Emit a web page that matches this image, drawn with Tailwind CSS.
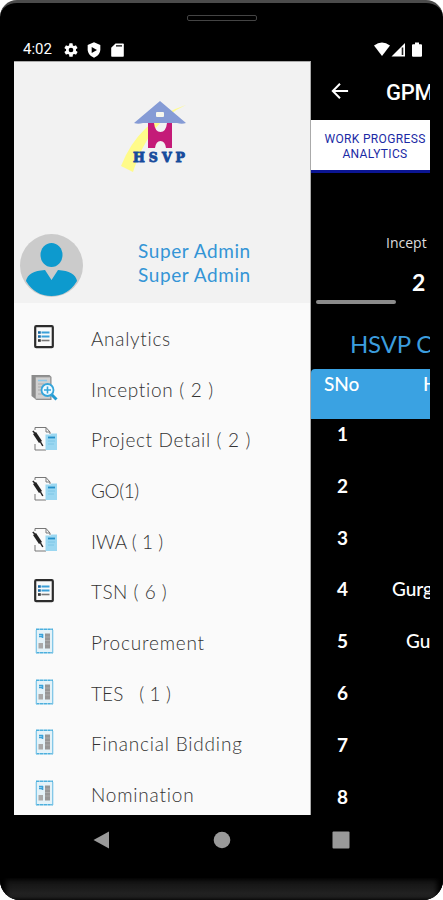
<!DOCTYPE html>
<html lang="en">
<head>
  <meta charset="UTF-8" />
  <meta name="viewport" content="width=device-width, initial-scale=1" />
  <title>HSVP - Menu</title>
  <script src="https://cdn.jsdelivr.net/npm/@tailwindcss/browser@4"></script>
</head>
<body class="bg-white overflow-hidden">

  <!-- icons shared by the menu rows -->
  <svg class="hidden">
    <symbol id="ic-list" viewBox="0 0 28 28">
      <rect x="5.2" y="3.2" width="17.6" height="21" rx="1" fill="#fafafa" stroke="#2c2c2c" stroke-width="2.2" />
      <path d="M11.500 9.500h8M11.500 13.500h8" stroke="#3b9fd8" stroke-width="1.800" />
      <path d="M11.500 17.500h8" stroke="#777" stroke-width="1.600" />
      <path d="M8 9.500h2.800M8 13.500h2.800" stroke="#1769a5" stroke-width="2.600" />
      <path d="M8 17.500h2.800" stroke="#333" stroke-width="2.600" />
    </symbol>
    <symbol id="ic-search" viewBox="0 0 28 28">
      <path d="M1.500 1h18l2 2v23h-15l-5-4z" fill="#8b8b8b" />
      <path d="M5.500 3h15v22h-15z" fill="#d0d0d0" stroke="#999" stroke-width=".8" />
      <path d="M8 6.500h9" stroke="#8cc8e8" stroke-width="1.500" />
      <path d="M8 10h6M8 13h4M8 16h4M8 20h7" stroke="#aaa" />
      <path d="M21 20l5.500 5.500" stroke="#239bd2" stroke-width="3" />
      <circle cx="17.500" cy="16" r="6" fill="#effaff" stroke="#35a5da" stroke-width="1.800" />
      <path d="M14 16h7M17.500 12.500v7" stroke="#35a5da" stroke-width="1.600" />
    </symbol>
    <symbol id="ic-edit" viewBox="0 0 28 28">
      <path d="M5 2.500h11l4 4V25H5z" fill="#fafafa" />
      <path d="M5 5v-2.500h11l4 4.500v2M5 19v6h11M16 2.500v4.500h4" fill="none" stroke="#777" />
      <path d="M15.500 9.500h5l1-1h5.500v16.500H15.500z" fill="#9bd7f1" />
      <path d="M18 12.500h7" stroke="#238fc8" stroke-width="1.800" />
      <path d="M18 16h7M18 19h6" stroke="#7dc6e6" />
      <path d="M4.500 8l6 9" stroke="#222" stroke-width="3.600" />
      <path d="M2.800 6l2 2M10.500 17l2.300 4" stroke="#222" stroke-width="1.500" />
    </symbol>
    <symbol id="ic-paper" viewBox="0 0 28 28">
      <path d="M6 2.500h17v23H6z" fill="#e4f2f8" />
      <path d="M6 2.200h17M6 25.800h17" stroke="#4bafdd" stroke-width="1.500" stroke-dasharray="3.400 .4" />
      <path d="M6.300 3v23M22.700 3v23" stroke="#79c4e6" stroke-width="1.200" />
      <path d="M15 6.500h5v15h-5z" fill="#969696" />
      <path d="M15 10h5M15 13.500h5M15 17h5" stroke="#b5b5b5" stroke-width=".7" />
      <path d="M8.500 16h4.500v5.500H8.500z" fill="#aaa" />
      <path d="M9 7.500h4M12.500 7v4M9 9.500h3" stroke="#3aa2da" stroke-width="1.600" />
    </symbol>
  </svg>

  <div class="relative w-[443px] h-[900px] rounded-t-[17px] rounded-b-[20px] bg-black border-t-[3px] border-[#4b4b4b] overflow-hidden flex flex-col">

    <div class="h-[35px] shrink-0 flex justify-center pt-[12px]">
      <div class="w-[70px] h-[6px] border border-[#444] rounded-[2px]"></div>
    </div>

    <!-- status bar -->
    <div class="h-[23px] shrink-0 flex items-center justify-between pl-[23px] pr-[20px]">
      <div class="flex items-center text-white">
        <span class="w-[40px] font-['Roboto'] text-[15px] leading-none whitespace-nowrap">4:02</span>
        <svg class="w-[16px] h-[16px]" viewBox="0 0 24 24" fill="#fff"><path d="M19.400 13c.1-.7.1-1.300 0-2l2.100-1.600c.2-.2.3-.4.100-.7l-2-3.400c-.1-.2-.4-.3-.6-.2l-2.500 1a7 7 0 0 0-1.700-1l-.4-2.600A.5.500 0 0 0 14 2h-4a.5.500 0 0 0-.5.400l-.4 2.700a7 7 0 0 0-1.700 1l-2.500-1c-.2-.1-.5 0-.6.200l-2 3.400c-.1.300-.1.500.1.700L4.600 11v2l-2.200 1.600c-.2.200-.2.400-.1.700l2 3.400c.1.200.4.300.6.200l2.500-1q.8.600 1.700 1l.4 2.700c0 .2.200.4.500.4h4c.2 0 .5-.2.500-.4l.4-2.700q.9-.4 1.700-1l2.500 1c.2.100.5 0 .6-.2l2-3.400c.1-.3.1-.5-.1-.7zM12 15.500a3.500 3.500 0 1 1 0-7 3.500 3.500 0 0 1 0 7z" /></svg>
        <svg class="w-[16px] h-[16px] ml-[7px]" viewBox="0 0 24 24"><path d="M12 .500L21.500 4.500v6.500c0 6-4 10.500-9.500 12.500C6.500 21.500 2.500 17 2.500 11V4.500z" fill="#fff" /><path d="M8.500 7.500v9l8-4.500z" fill="#000" /></svg>
        <svg class="w-[13px] h-[14px] ml-[9px]" viewBox="0 0 13 14"><path d="M4.500.500H12q.8 0 .8.800V13q0 .8-.8.800H1q-.8 0-.8-.8V4.800z" fill="#fff" /><path d="M5 2.800h6" stroke="#000" stroke-width="1.200" /></svg>
      </div>
      <svg class="w-[48px] h-[15px] mr-px" viewBox="0 0 48 15" fill="#fff">
        <path d="M0 3.500q8-6 16 0l-8 10.500z" />
        <path d="M31 1v13.500H17.500z" /><path d="M28.500 5.500v7.500" stroke="#222" stroke-width="1.600" />
        <path d="M41 .500h4v1.700h2q1 0 1 1v10.500q0 1-1 1h-8q-1 0-1-1V3.200q0-1 1-1h2z" />
      </svg>
    </div>

    <div class="h-[754px] shrink-0 flex ml-[14px] mr-[13px]">

      <!-- drawer -->
      <aside class="w-[297px] shrink-0 bg-[#fafafa] overflow-hidden border-r border-t border-[#aaa] font-['Lato'] font-light">
        <div class="h-[241px] bg-[#f2f2f2] flex flex-col">
          <div class="h-[172px] flex justify-center pt-[39px] pr-[16px]">
            <svg class="w-[66px] h-[71px]" viewBox="0 0 66 71">
              <path d="M65 4Q28 20 12 71L0 65Q18 19 65 4z" fill="#fffb8a" />
              <path d="M39 0L65 22q-4 1.500-9 0H22q-5 1.500-9 0z" fill="#859bd5" />
              <rect x="35" y="11" width="8" height="5" rx="1" fill="#f6f6ed" />
              <path d="M27 22h6q1 9 6.500 9t6.500-9h5v25h-6q-1-7-5.500-7t-5.500 7h-7z" fill="#c41b78" />
              <text x="12" y="61" textLength="52" lengthAdjust="spacing" font-family="DejaVu Serif" font-weight="bold" font-size="12.500" fill="#174b9c" stroke="#174b9c" stroke-width=".9">HSVP</text>
            </svg>
          </div>
          <div class="flex items-center pl-[6px]">
            <svg class="w-[63px] h-[63px] shrink-0" viewBox="0 0 63 63">
              <circle cx="31.500" cy="31.500" r="31.500" fill="#cbcbcb" />
              <ellipse cx="31.500" cy="21" rx="11" ry="12" fill="#0d9ace" />
              <path d="M6 47Q8 37 25 36l6.500 10L38 36Q55 37 57 47Q48 62 31.500 62T6 47z" fill="#0d9ace" />
            </svg>
            <div class="ml-[55px] -mt-[5px] text-[#3495d6] text-[19px] leading-6 font-normal tracking-[0.600px] whitespace-nowrap">
              <p>Super Admin</p>
              <p>Super Admin</p>
            </div>
          </div>
        </div>

        <ul class="pt-[11px] text-[19px] text-[#333]">
          <li class="h-[50.650px] flex items-center pl-4"><svg class="w-7 h-7 -mt-1 mr-[33px]"><use href="#ic-list" /></svg><span class="tracking-[0.7px] whitespace-pre">Analytics</span></li>
          <li class="h-[50.650px] flex items-center pl-4"><svg class="w-7 h-7 -mt-1 mr-[33px]"><use href="#ic-search" /></svg><span class="tracking-[0.7px] whitespace-pre">Inception ( 2 )</span></li>
          <li class="h-[50.650px] flex items-center pl-4"><svg class="w-7 h-7 -mt-1 mr-[33px]"><use href="#ic-edit" /></svg><span class="tracking-[0.65px] whitespace-pre">Project Detail ( 2 )</span></li>
          <li class="h-[50.650px] flex items-center pl-4"><svg class="w-7 h-7 -mt-1 mr-[33px]"><use href="#ic-edit" /></svg><span class="tracking-[-0.4px] whitespace-pre">GO(1)</span></li>
          <li class="h-[50.650px] flex items-center pl-4"><svg class="w-7 h-7 -mt-1 mr-[33px]"><use href="#ic-edit" /></svg><span class="tracking-[0.05px] whitespace-pre">IWA ( 1 )</span></li>
          <li class="h-[50.650px] flex items-center pl-4"><svg class="w-7 h-7 -mt-1 mr-[33px]"><use href="#ic-list" /></svg><span class="tracking-[0.5px] whitespace-pre">TSN ( 6 )</span></li>
          <li class="h-[50.650px] flex items-center pl-4"><svg class="w-7 h-7 -mt-1 mr-[33px]"><use href="#ic-paper" /></svg><span class="tracking-[0.8px] whitespace-pre">Procurement</span></li>
          <li class="h-[50.650px] flex items-center pl-4"><svg class="w-7 h-7 -mt-1 mr-[33px]"><use href="#ic-paper" /></svg><span class="tracking-[0.1px] whitespace-pre">TES   ( 1 )</span></li>
          <li class="h-[50.650px] flex items-center pl-4"><svg class="w-7 h-7 -mt-1 mr-[33px]"><use href="#ic-paper" /></svg><span class="tracking-[0.8px] whitespace-pre">Financial Bidding</span></li>
          <li class="h-[50.650px] flex items-center pl-4"><svg class="w-7 h-7 -mt-1 mr-[33px]"><use href="#ic-paper" /></svg><span class="tracking-[0.8px] whitespace-pre">Nomination</span></li>
        </ul>
      </aside>

      <!-- page behind the drawer -->
      <main class="w-[119px] overflow-hidden text-white font-['Lato'] whitespace-nowrap">
        <div class="h-[59px] flex items-center pl-[20px]">
          <svg class="w-[18px] h-[18px] shrink-0" viewBox="0 0 20 20" fill="none" stroke="#fff" stroke-width="2.200"><path d="M19 10H2M10 2L2 10l8 8" /></svg>
          <h1 class="ml-[37px] mt-[3px] font-['Roboto'] font-medium text-[22px] tracking-[-0.3px]">GPM</h1>
        </div>
        <div class="h-[53px] bg-white border-b-[3px] border-[#0b1592] flex items-center justify-center pl-[9px] pt-[3px] font-['Roboto'] text-[12px] leading-[15px] tracking-[0.35px] text-[#1b2aa5] text-center">
          <p>WORK PROGRESS<br>ANALYTICS</p>
        </div>
        <div class="pt-[60px] pl-[75px] font-['Open_Sans'] text-[14px] leading-5 text-[#ddd]">Incept</div>
        <div class="pl-[101px] pt-[14px] text-[23px] leading-[30px] font-bold -mb-[9px]">2</div>
        <div class="mt-[12px] ml-[5px] w-[80px] h-[4px] rounded-full bg-[#8b8b8b]"></div>
        <div class="h-[65px] pt-[25px] pl-[39px] text-[24px] leading-[30px] tracking-[-0.2px] text-[#3c9dde]">HSVP C</div>
        <div class="h-[50px] bg-[#3aa2e2] rounded-tl-[4px] flex pl-[13px] pt-[3px] text-[19px] leading-6 font-medium">
          <span class="w-[99px] shrink-0">SNo</span><span>H</span>
        </div>
        <div class="text-[19px] leading-[30px] font-bold">
          <div class="h-[51.800px] flex pl-[26px]"><span>1</span></div>
          <div class="h-[51.800px] flex pl-[26px]"><span>2</span></div>
          <div class="h-[51.800px] flex pl-[26px]"><span>3</span></div>
          <div class="h-[51.800px] flex pl-[26px]"><span class="w-[55px] shrink-0">4</span><span class="font-medium">Gurg</span></div>
          <div class="h-[51.800px] flex pl-[26px]"><span class="w-[69px] shrink-0">5</span><span class="font-medium">Gu</span></div>
          <div class="h-[51.800px] flex pl-[26px]"><span>6</span></div>
          <div class="h-[51.800px] flex pl-[26px]"><span>7</span></div>
          <div class="h-[51.800px] flex pl-[26px]"><span>8</span></div>
        </div>
      </main>
    </div>

    <!-- navigation buttons -->
    <div class="h-[50px] shrink-0 flex items-center pl-[93px] fill-[#999]">
      <svg class="w-[17px] h-[18px]" viewBox="0 0 17 18"><path d="M16 .500v17L.500 9z" /></svg>
      <svg class="w-[18px] h-[18px] ml-[103px]" viewBox="0 0 18 18"><circle cx="9" cy="9" r="8.300" /></svg>
      <svg class="w-[18px] h-[18px] ml-[101px]" viewBox="0 0 18 18"><rect x=".5" y=".5" width="17" height="17" rx="1" /></svg>
    </div>

    <div class="mt-auto h-[22px] shrink-0 bg-linear-to-b from-[#101010] to-[#292929] shadow-[inset_6px_0_5px_#000,inset_-6px_0_5px_#000]"></div>
  </div>

</body>
</html>
